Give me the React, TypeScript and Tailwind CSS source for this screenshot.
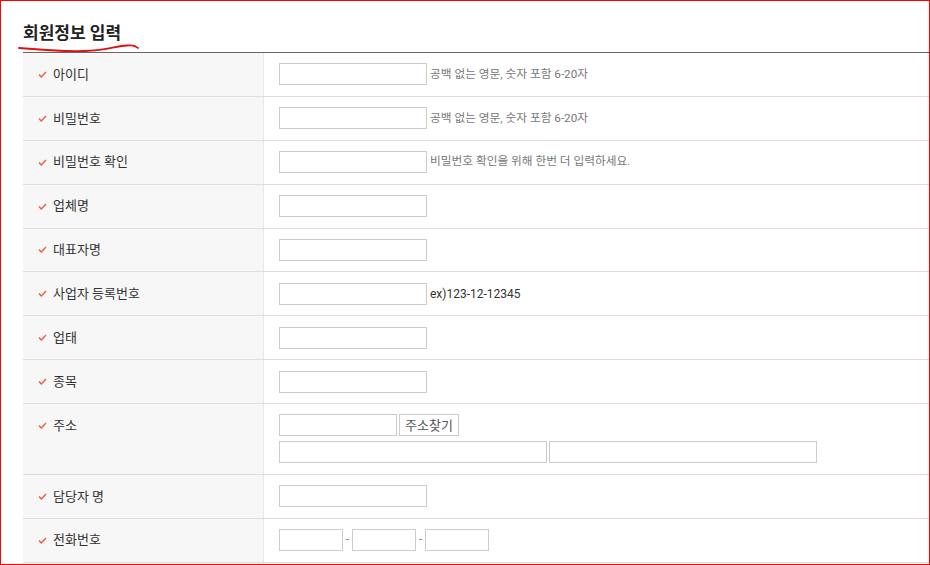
import React from 'react'

type Row = {
    label: string
    kind: 'text' | 'address' | 'phone'
    help?: string
    helpDark?: boolean
}

const rows: Row[] = [
    { label: '아이디', kind: 'text', help: '공백 없는 영문, 숫자 포함 6-20자' },
    { label: '비밀번호', kind: 'text', help: '공백 없는 영문, 숫자 포함 6-20자' },
    { label: '비밀번호 확인', kind: 'text', help: '비밀번호 확인을 위해 한번 더 입력하세요.' },
    { label: '업체명', kind: 'text' },
    { label: '대표자명', kind: 'text' },
    { label: '사업자 등록번호', kind: 'text', help: 'ex)123-12-12345', helpDark: true },
    { label: '업태', kind: 'text' },
    { label: '종목', kind: 'text' },
    { label: '주소', kind: 'address' },
    { label: '담당자 명', kind: 'text' },
    { label: '전화번호', kind: 'phone' },
]

const inputCls = 'h-[22px] border border-[#cccccc] bg-white outline-none'

function Check() {
    return (
        <svg width="9" height="7" viewBox="0 0 9 7" className="shrink-0">
            <polyline points="1,3.5 3.3,6 8,1" fill="none" stroke="#ee5a45" strokeWidth="1.4" />
        </svg>
    )
}

function Field({ row }: { row: Row }) {
    if (row.kind === 'address') {
        return (
            <div className="flex flex-col gap-[5px]">
                <div className="flex gap-[2px]">
                    <input className={`${inputCls} w-[118px]`} />
                    <button className="h-[22px] w-[60px] border border-[#cccccc] bg-white text-[13px] text-[#555]">주소찾기</button>
                </div>
                <div className="flex gap-[2px]">
                    <input className={`${inputCls} w-[268px]`} />
                    <input className={`${inputCls} w-[268px]`} />
                </div>
            </div>
        )
    }
    if (row.kind === 'phone') {
        return (
            <div className="flex items-center">
                <input className={`${inputCls} w-[64px]`} />
                <span className="w-[9px] text-center text-[11px] text-[#777]">-</span>
                <input className={`${inputCls} w-[64px]`} />
                <span className="w-[9px] text-center text-[11px] text-[#777]">-</span>
                <input className={`${inputCls} w-[64px]`} />
            </div>
        )
    }
    return (
        <div className="flex items-center">
            <input className={`${inputCls} w-[148px]`} />
            {row.help && (
                <span className={row.helpDark ? 'ml-[3px] text-[12px] text-[#333]' : 'ml-[3px] text-[11.7px] text-[#777]'}>{row.help}</span>
            )}
        </div>
    )
}

export default function App() {
    return (
        <div className="w-[930px] h-[565px] overflow-hidden border border-[#ff0000] bg-white font-['Roboto','Noto_Sans_CJK_KR',sans-serif]">
            <div className="pl-[22px]">
                <div className="relative pt-[20px] h-[51px]">
                    <h2 className="text-[17px] font-bold leading-[24px] text-[#222]">회원정보 입력</h2>
                    <svg className="absolute left-[-6px] top-[41px]" width="130" height="10" viewBox="0 0 130 10">
                        <path d="M2 6 C 25 8, 50 9.5, 68 9 S 100 4, 110 3.5 S 117 4.5, 121 6" fill="none" stroke="#e01010" strokeWidth="1.8" strokeLinecap="round" />
                    </svg>
                </div>
                <div className="w-[1000px] border-t border-[#666666]">
                    {rows.map((row) => (
                        <div key={row.label} className="flex border-b border-[#dddddd]">
                            <div className="flex w-[241px] shrink-0 items-start border-r border-[#e8e8e8] bg-[#f7f7f7] pl-[15px] pt-[10.45px] pb-[10.45px]">
                                <div className="flex h-[22px] items-center gap-[6px]">
                                    <Check />
                                    <span className="text-[13px] font-normal text-[#333]">{row.label}</span>
                                </div>
                            </div>
                            <div className="flex-1 pl-[15px] pt-[10.45px] pb-[10.45px]">
                                <Field row={row} />
                            </div>
                        </div>
                    ))}
                </div>
            </div>
        </div>
    )
}
